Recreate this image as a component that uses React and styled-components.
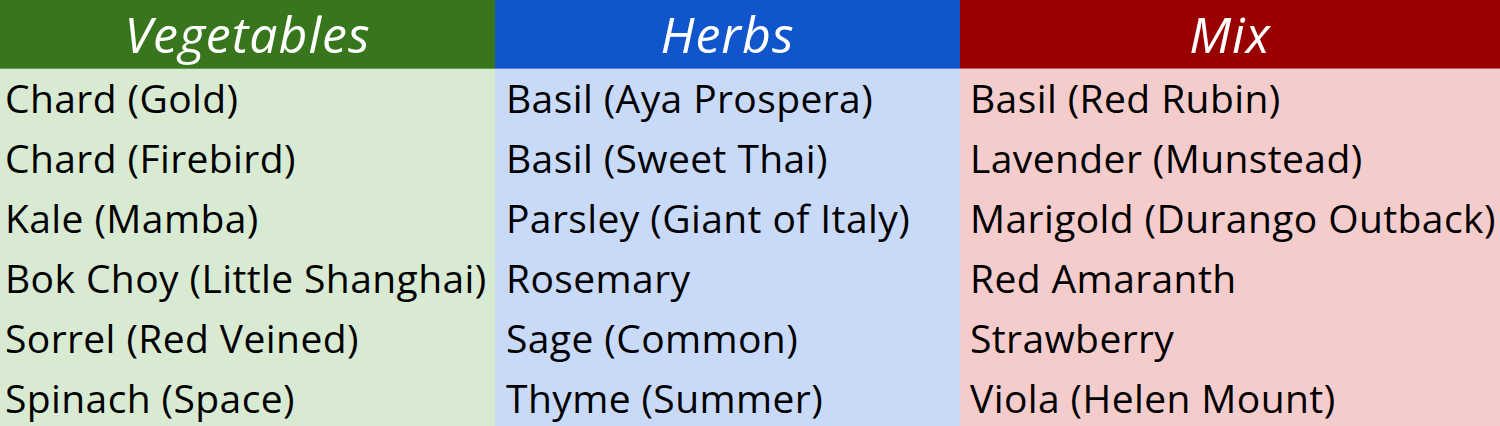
import React from "react";
import styled, { createGlobalStyle } from "styled-components";

const GlobalStyle = createGlobalStyle`
  html, body {
    margin: 0;
    padding: 0;
    background: #ffffff;
  }
`;

const Table = styled.div`
  display: grid;
  grid-template-columns: 495px 465px 540px;
  width: 1500px;
  height: 426px;
  overflow: hidden;
  font-family: "Open Sans", "Liberation Sans", sans-serif;
  color: #000;
`;

const Column = styled.div`
  display: flex;
  flex-direction: column;
  background: ${(p) => p.body};
`;

const Header = styled.div`
  height: 68px;
  display: flex;
  align-items: center;
  justify-content: center;
  background: ${(p) => p.head};
  color: #fff;
  font-style: italic;
  font-size: 50px;
  letter-spacing: 1px;
  border-bottom: 1px solid ${(p) => p.line};
`;

const Cell = styled.div`
  height: 60px;
  display: flex;
  align-items: center;
  padding-left: ${(p) => p.pad}px;
  padding-bottom: 4px;
  box-sizing: border-box;
  font-size: 39px;
  letter-spacing: 0.4px;
  white-space: nowrap;
`;

const columns = [
  {
    title: "Vegetables",
    head: "#38761d",
    body: "#d9ead3",
    line: "#6b9a55",
    pad: 5,
    items: [
      "Chard (Gold)",
      "Chard (Firebird)",
      "Kale (Mamba)",
      "Bok Choy (Little Shanghai)",
      "Sorrel (Red Veined)",
      "Spinach (Space)",
    ],
  },
  {
    title: "Herbs",
    head: "#1155cc",
    body: "#c9daf8",
    line: "#5585dd",
    pad: 11,
    items: [
      "Basil (Aya Prospera)",
      "Basil (Sweet Thai)",
      "Parsley (Giant of Italy)",
      "Rosemary",
      "Sage (Common)",
      "Thyme (Summer)",
    ],
  },
  {
    title: "Mix",
    head: "#990000",
    body: "#f4cccc",
    line: "#c06060",
    pad: 10,
    items: [
      "Basil (Red Rubin)",
      "Lavender (Munstead)",
      "Marigold (Durango Outback)",
      "Red Amaranth",
      "Strawberry",
      "Viola (Helen Mount)",
    ],
  },
];

export default function App() {
  return (
    <>
      <GlobalStyle />
      <Table>
        {columns.map((c) => (
          <Column key={c.title} body={c.body}>
            <Header head={c.head} line={c.line}>{c.title}</Header>
            {c.items.map((it) => (
              <Cell key={it} pad={c.pad}>{it}</Cell>
            ))}
          </Column>
        ))}
      </Table>
    </>
  );
}
